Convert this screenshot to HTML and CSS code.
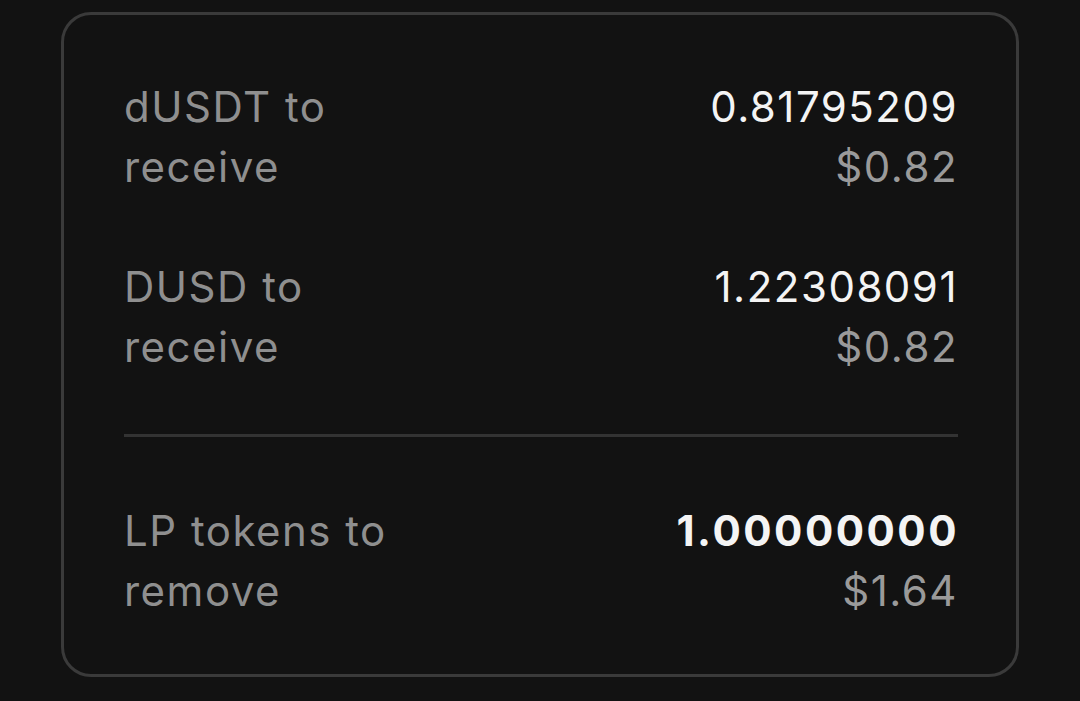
FILE: index.html
```html
<!DOCTYPE html>
<html>
<head>
<meta charset="utf-8">
<link rel="stylesheet" href="styles.css">
</head>
<body>
<div class="card">
  <div class="row">
    <div class="label">dUSDT to receive</div>
    <div class="values">
      <div class="amount">0.81795209</div>
      <div class="usd">$0.82</div>
    </div>
  </div>
  <div class="row">
    <div class="label">DUSD to receive</div>
    <div class="values">
      <div class="amount">1.22308091</div>
      <div class="usd">$0.82</div>
    </div>
  </div>
  <div class="divider"></div>
  <div class="row">
    <div class="label">LP tokens to remove</div>
    <div class="values">
      <div class="amount strong">1.00000000</div>
      <div class="usd">$1.64</div>
    </div>
  </div>
</div>
</body>
</html>
```

FILE: styles.css
```css
html, body {
  margin: 0;
  padding: 0;
  background: #121212;
}
body {
  font-family: Inter, "Noto Sans", sans-serif;
  padding: 12px 61px 0 61px;
  height: 701px;
  box-sizing: border-box;
  overflow: hidden;
}
.card {
  border: 3px solid #3a3a3a;
  border-radius: 30px;
  background: #121212;
  padding: 62px 58px 53px 60px;
  display: flex;
  flex-direction: column;
  gap: 60px;
}
.row {
  display: flex;
  justify-content: space-between;
  align-items: flex-start;
  font-size: 42px;
  line-height: 60px;
  letter-spacing: 1.5px;
}
.label {
  color: #8f8f8f;
  max-width: 300px;
}
.values {
  text-align: right;
}
.amount {
  color: #f4f4f4;
}
.amount.strong {
  font-weight: 700;
  letter-spacing: 2.5px;
  margin-right: -1px;
}
.usd {
  color: #9a9a9a;
}
.divider {
  height: 3px;
  background: #333333;
  margin: -3px 0 4px 0;
}
```
